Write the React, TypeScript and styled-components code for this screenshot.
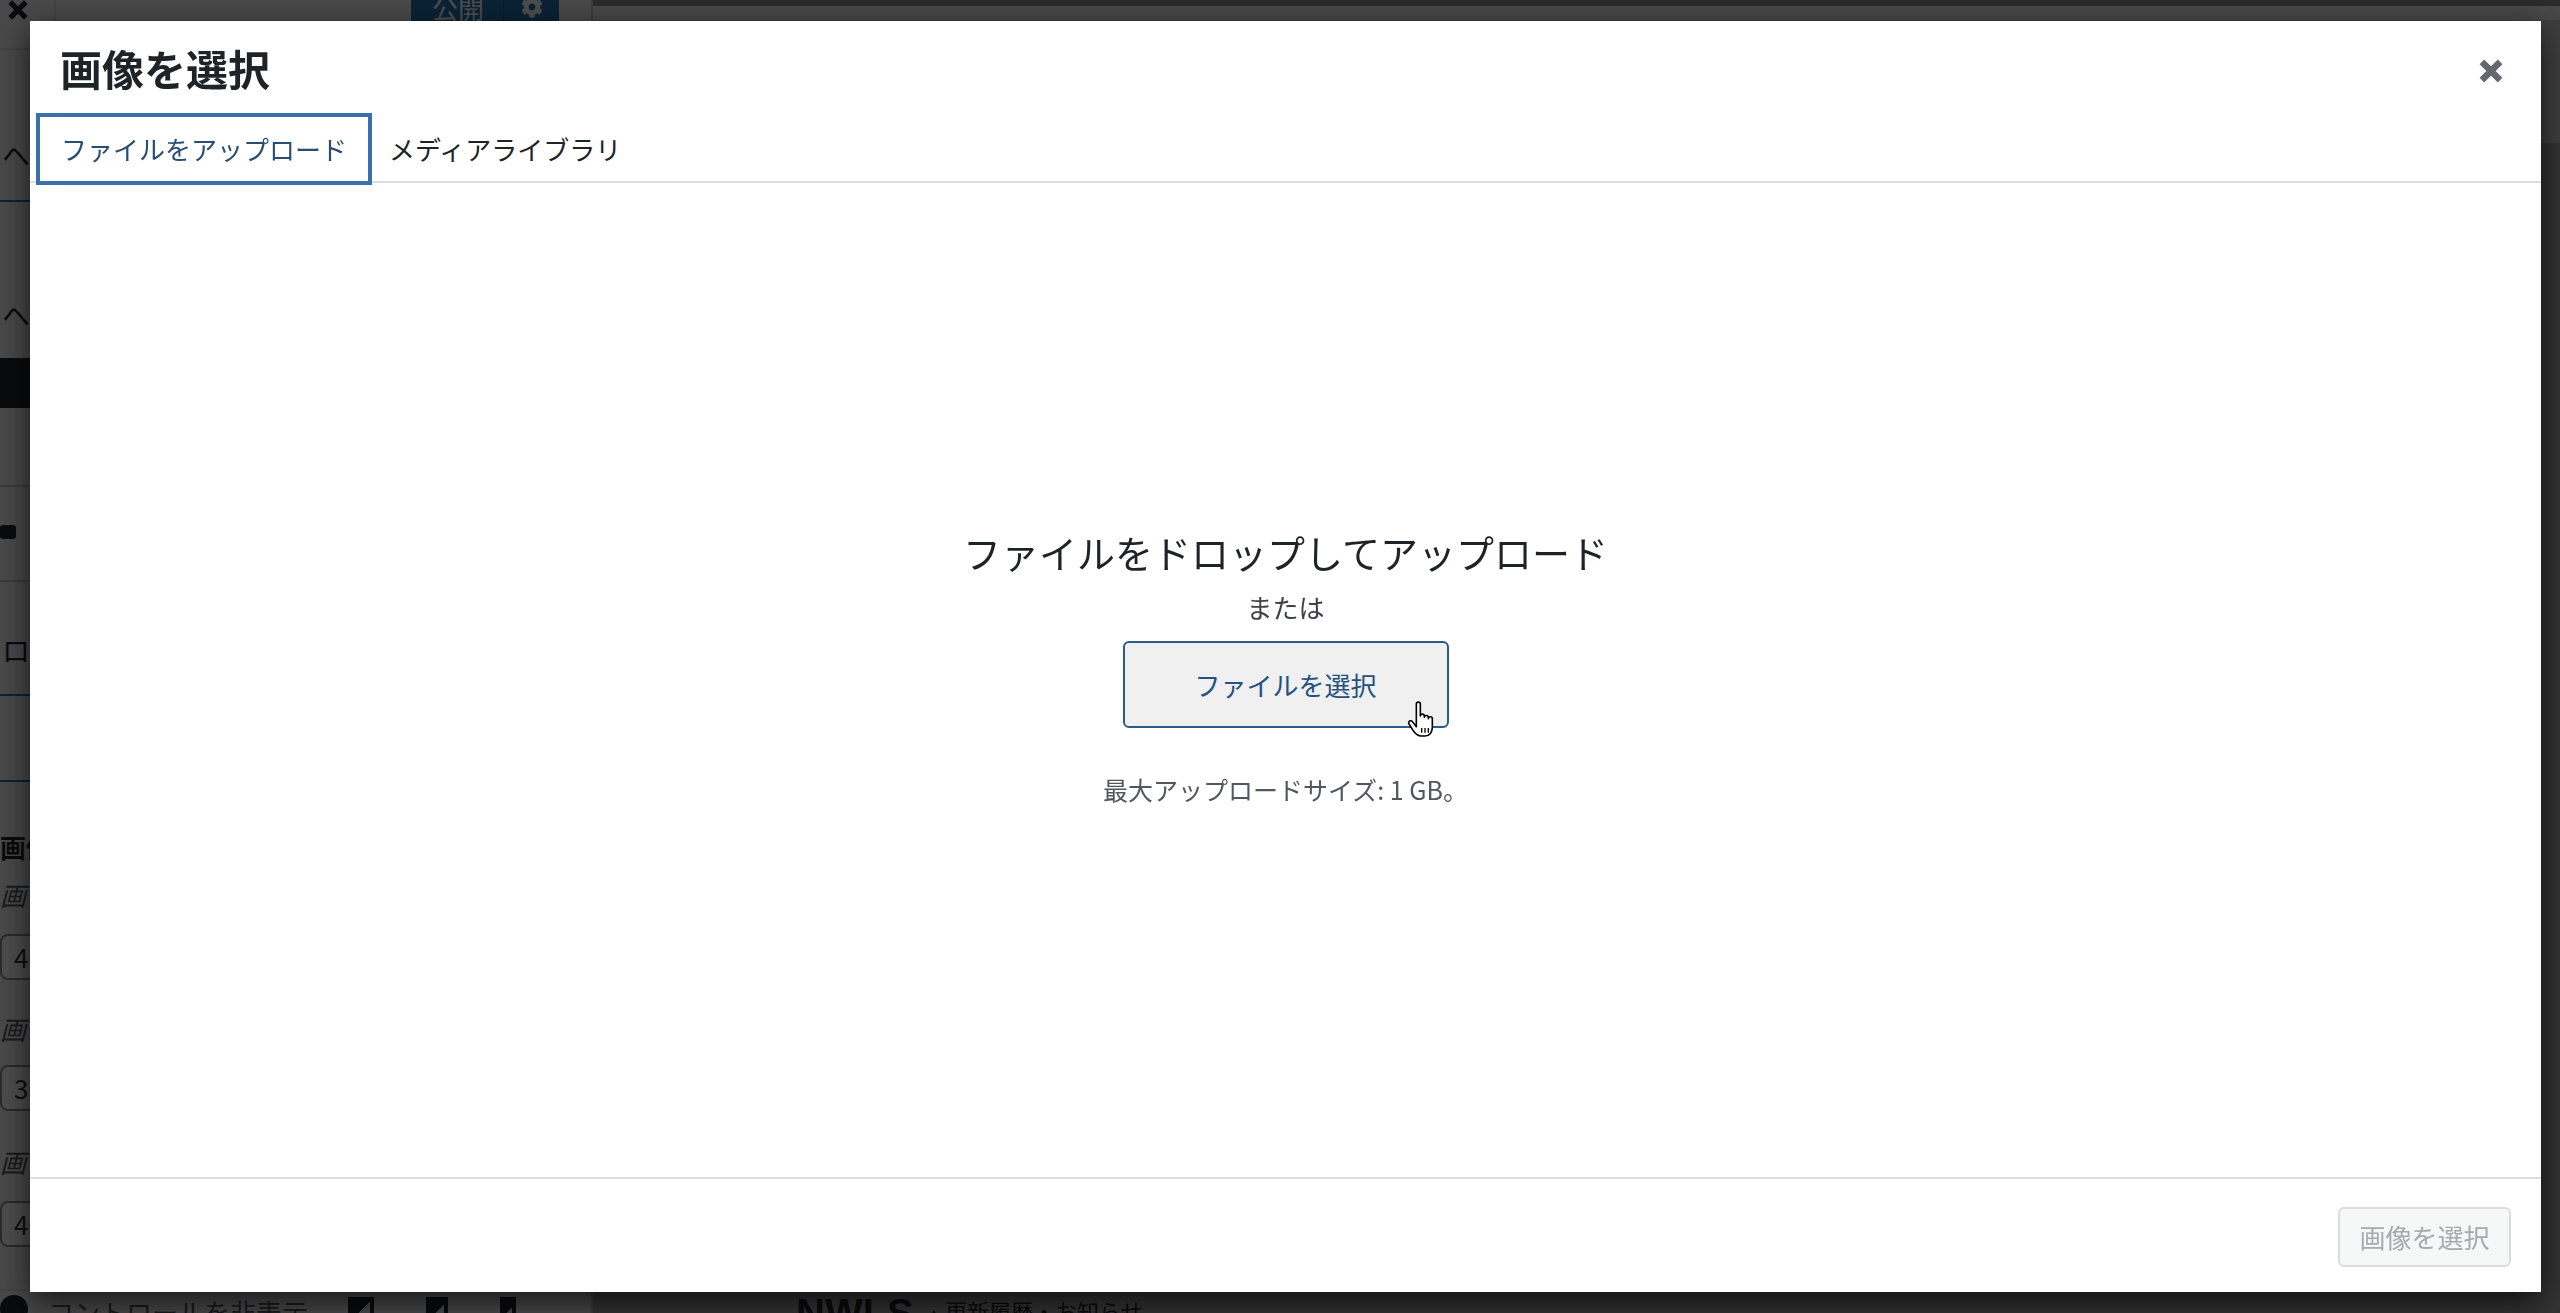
import React from "react";
import styled, { createGlobalStyle } from "styled-components";
import { FaCog } from "react-icons/fa";

const GlobalStyle = createGlobalStyle`
  * { box-sizing: border-box; }
  html, body {
    margin: 0;
    padding: 0;
    height: 100%;
    overflow: hidden;
    background: #aaaaaa;
  }
  body {
    font-family: "Noto Sans CJK JP", "Noto Sans", sans-serif;
  }
  #root { height: 100%; }
`;

const font = `"Noto Sans CJK JP", "Noto Sans", sans-serif`;

/* ---------- customizer behind the modal ---------- */

const Customizer = styled.div`
  display: flex;
  height: 100vh;
`;

const Sidebar = styled.aside`
  width: 593px;
  flex-shrink: 0;
  display: flex;
  flex-direction: column;
  background: #f0f0f1;
  border-right: 2px solid #c3c4c7;
  overflow: hidden;
`;

const SidebarHeader = styled.div`
  height: 50px;
  flex-shrink: 0;
  display: flex;
  align-items: flex-start;
  justify-content: space-between;
  padding-right: 32px;
  border-bottom: 2px solid #dcdcde;
`;

const HeaderClose = styled.div`
  width: 56px;
  height: 48px;
  padding-left: 6px;
  margin-top: -2px;
  border-right: 2px solid #dcdcde;
  color: #1d2327;
`;

const PublishGroup = styled.div`
  display: flex;
  margin-top: -12px;
  height: 40px;
  border-radius: 0 0 6px 6px;
  overflow: hidden;
  background: #2271b1;
  color: #ffffff;
`;

const PublishButton = styled.div`
  width: 92px;
  padding-left: 21px;
  font-size: 26px;
  line-height: 40px;
`;

const GearButton = styled.div`
  width: 56px;
  display: flex;
  align-items: center;
  justify-content: center;
  padding-bottom: 2px;
  border-left: 1px solid #135e96;
`;

const SidebarBody = styled.div`
  flex: 1;
  display: flex;
  flex-direction: column;
  overflow: hidden;
`;

const SectionTitle = styled.div<{ $mt: number }>`
  margin-top: ${(p) => p.$mt}px;
  height: 50px;
  display: flex;
  align-items: center;
  padding-left: 2px;
  font-size: 28px;
  color: #1d2327;
  white-space: nowrap;
`;

const Divider = styled.div<{ $mt: number; $accent?: boolean }>`
  margin-top: ${(p) => p.$mt}px;
  height: 2px;
  background: ${(p) => (p.$accent ? "#2271b1" : "#c3c4c7")};
`;

const DarkBar = styled.div<{ $mt: number }>`
  margin-top: ${(p) => p.$mt}px;
  height: 50px;
  margin-right: 40px;
  background: #1d2327;
`;

const ToggleRow = styled.div<{ $mt: number }>`
  margin-top: ${(p) => p.$mt}px;
  height: 24px;
  display: flex;
  align-items: center;
  gap: 12px;
  font-size: 26px;
  color: #1d2327;
`;

const TogglePill = styled.span`
  width: 16px;
  height: 14px;
  border-radius: 3px;
  background: #1d2327;
`;

const FieldLabel = styled.div<{ $mt: number; $italic?: boolean }>`
  margin-top: ${(p) => p.$mt}px;
  height: 36px;
  line-height: 36px;
  font-size: 26px;
  font-weight: ${(p) => (p.$italic ? 400 : 700)};
  font-style: ${(p) => (p.$italic ? "italic" : "normal")};
  color: ${(p) => (p.$italic ? "#50575e" : "#1d2327")};
  white-space: nowrap;
`;

const NumberInput = styled.div<{ $mt: number }>`
  margin-top: ${(p) => p.$mt}px;
  height: 46px;
  width: 520px;
  border: 2px solid #8c8f94;
  border-radius: 8px;
  background: #ffffff;
  padding-left: 12px;
  font-size: 26px;
  line-height: 42px;
  color: #2c3338;
`;

const SidebarFooter = styled.div`
  height: 24px;
  flex-shrink: 0;
  display: flex;
  align-items: flex-start;
  padding-top: 4px;
  gap: 20px;
  border-top: 2px solid #dcdcde;
  overflow: hidden;
`;

const CollapseIcon = styled.span`
  width: 28px;
  height: 28px;
  border-radius: 50%;
  background: #1d2327;
  flex-shrink: 0;
`;

const FooterLabel = styled.span`
  font-size: 26px;
  line-height: 34px;
  color: #50575e;
  white-space: nowrap;
`;

const Devices = styled.div`
  display: flex;
  gap: 52px;
  margin-left: 20px;
  padding-top: 2px;
`;

const DeviceIcon = styled.span<{ $w: number }>`
  width: ${(p) => p.$w}px;
  height: 28px;
  border: 4px solid #1d2327;
  border-bottom: 0;
  background: linear-gradient(135deg, #1d2327 0 45%, transparent 45%);
`;

const Preview = styled.main`
  flex: 1;
  display: flex;
  flex-direction: column;
  background: #aaaaaa;
`;

const PreviewTopBar = styled.div`
  height: 6px;
  background: #8c8c8c;
`;

const SiteHeader = styled.div`
  height: 14px;
  background: #ededed;
`;

const SiteHero = styled.div`
  height: 123px;
  background: #cfcfcf;
`;

const SiteBody = styled.div`
  flex: 1;
`;

const SiteFooter = styled.div`
  height: 22px;
  display: flex;
  align-items: flex-start;
  gap: 14px;
  padding-left: 203px;
  color: #1d2327;
  overflow: hidden;
`;

const SiteLogo = styled.span`
  font-family: "Liberation Sans", sans-serif;
  font-weight: 700;
  font-size: 40px;
  line-height: 40px;
  margin-top: 2px;
`;

const SiteLinks = styled.span`
  font-size: 22px;
  line-height: 30px;
  margin-top: 4px;
`;

/* ---------- media modal ---------- */

const Backdrop = styled.div`
  position: fixed;
  inset: 0;
  background: rgba(0, 0, 0, 0.7);
`;

const Modal = styled.div`
  position: fixed;
  top: 21px;
  left: 30px;
  right: 19px;
  bottom: 21px;
  display: flex;
  flex-direction: column;
  background: #ffffff;
  box-shadow: 0 10px 30px rgba(0, 0, 0, 0.7);
  font-family: ${font};
`;

const ModalHeader = styled.header`
  height: 92px;
  flex-shrink: 0;
  padding: 20px 30px 0;
`;

const Title = styled.h1`
  margin: 0;
  font-size: 42px;
  line-height: 54px;
  font-weight: 700;
  color: #1d2327;
`;

const CloseButton = styled.button`
  position: absolute;
  top: 0;
  right: 0;
  width: 100px;
  height: 100px;
  padding: 0;
  border: 0;
  background: none;
  display: flex;
  align-items: center;
  justify-content: center;
  color: #646970;
  cursor: pointer;
`;

const Router = styled.nav`
  height: 70px;
  flex-shrink: 0;
  display: flex;
  align-items: flex-start;
  padding: 4px 0 0 10px;
  border-bottom: 2px solid #dcdcde;
`;

const RouterTab = styled.button<{ $active?: boolean }>`
  position: relative;
  z-index: ${(p) => (p.$active ? 2 : 1)};
  height: 64px;
  padding: 0 21px;
  border: 0;
  background: #ffffff;
  font-family: ${font};
  font-size: 26px;
  line-height: 64px;
  color: ${(p) => (p.$active ? "#2a4e72" : "#1d2327")};
  box-shadow: ${(p) => (p.$active ? "0 0 0 4px #3b70aa" : "none")};
  cursor: pointer;
`;

const UploadArea = styled.section`
  flex: 1;
  display: flex;
  flex-direction: column;
  align-items: center;
  padding-top: 341px;
`;

const DropHeading = styled.h2`
  margin: 0;
  font-size: 38px;
  line-height: 56px;
  font-weight: 400;
  color: #1d2327;
`;

const OrText = styled.p`
  margin: 9px 0 0;
  font-size: 26px;
  line-height: 36px;
  color: #3c434a;
`;

const SelectFilesButton = styled.button`
  position: relative;
  margin-top: 16px;
  width: 326px;
  height: 87px;
  border: 2px solid #2e5a86;
  border-radius: 6px;
  background: #f0f0f1;
  font-family: ${font};
  font-size: 26px;
  color: #24527e;
  cursor: pointer;
`;

const Pointer = styled.svg`
  position: absolute;
  left: 280px;
  top: 58px;
`;

const MaxSize = styled.p`
  margin: 43px 0 0;
  font-size: 25px;
  line-height: 36px;
  color: #50575e;
`;

const ModalFooter = styled.footer`
  height: 115px;
  flex-shrink: 0;
  display: flex;
  align-items: center;
  justify-content: flex-end;
  padding: 2px 30px 0 0;
  border-top: 2px solid #dcdcde;
`;

const SelectImageButton = styled.button`
  width: 173px;
  height: 60px;
  border: 2px solid #dcdcde;
  border-radius: 6px;
  background: #f6f7f7;
  font-family: ${font};
  font-size: 26px;
  color: #a7aaad;
`;

const XIcon = ({ size, stroke }: { size: number; stroke: number }) => (
  <svg width={size} height={size} viewBox="0 0 20 20">
    <path
      d="M3.5 3.5 L16.5 16.5 M16.5 3.5 L3.5 16.5"
      stroke="currentColor"
      strokeWidth={stroke}
      fill="none"
    />
  </svg>
);

const HandCursor = () => (
  <Pointer width="32" height="38" viewBox="0 0 24 28">
    <path
      d="M8.5 2 C8.5 1.2 9.2 0.6 10 0.6 C10.8 0.6 11.5 1.2 11.5 2 L11.5 11 C11.5 10.2 12.2 9.6 13 9.6 C13.8 9.6 14.5 10.2 14.5 11 L14.5 12 C14.5 11.2 15.2 10.6 16 10.6 C16.8 10.6 17.5 11.2 17.5 12 L17.5 13 C17.5 12.2 18.2 11.6 19 11.6 C19.8 11.6 20.5 12.2 20.5 13 L20.5 19.5 C20.5 23 18.5 26 15 26 L12 26 C9.5 26 8 24.5 6.5 22.5 L3 17 C2.5 16.2 2.8 15.2 3.5 14.8 C4.3 14.4 5.2 14.7 5.7 15.4 L8.5 19 Z"
      fill="#ffffff"
      stroke="#000000"
      strokeWidth="1.2"
      strokeLinejoin="round"
    />
    <path
      d="M12.5 20 L12.5 23.5 M15 20 L15 23.5 M17.5 20 L17.5 23.5"
      stroke="#000000"
      strokeWidth="1"
    />
  </Pointer>
);

export default function App() {
  return (
    <>
      <GlobalStyle />
      <Customizer>
        <Sidebar>
          <SidebarHeader>
            <HeaderClose>
              <XIcon size={24} stroke={4.4} />
            </HeaderClose>
            <PublishGroup>
              <PublishButton>公開</PublishButton>
              <GearButton>
                <FaCog size={22} />
              </GearButton>
            </PublishGroup>
          </SidebarHeader>
          <SidebarBody>
            <SectionTitle $mt={80}>ヘッダー</SectionTitle>
            <Divider $mt={20} $accent />
            <SectionTitle $mt={88}>ヘッダー画像</SectionTitle>
            <DarkBar $mt={18} />
            <Divider $mt={77} />
            <ToggleRow $mt={33}>
              <TogglePill />
              ヘッダーを表示
            </ToggleRow>
            <Divider $mt={36} />
            <SectionTitle $mt={43}>ロゴ</SectionTitle>
            <Divider $mt={19} $accent />
            <Divider $mt={84} $accent />
            <FieldLabel $mt={47}>画像サイズ</FieldLabel>
            <FieldLabel $mt={12} $italic>
              画像の幅
            </FieldLabel>
            <NumberInput $mt={21}>400</NumberInput>
            <FieldLabel $mt={31} $italic>
              画像の高さ
            </FieldLabel>
            <NumberInput $mt={18}>300</NumberInput>
            <FieldLabel $mt={33} $italic>
              画像の最大幅
            </FieldLabel>
            <NumberInput $mt={21}>400</NumberInput>
          </SidebarBody>
          <SidebarFooter>
            <CollapseIcon />
            <FooterLabel>コントロールを非表示</FooterLabel>
            <Devices>
              <DeviceIcon $w={26} />
              <DeviceIcon $w={22} />
              <DeviceIcon $w={16} />
            </Devices>
          </SidebarFooter>
        </Sidebar>
        <Preview>
          <PreviewTopBar />
          <SiteHeader />
          <SiteHero />
          <SiteBody />
          <SiteFooter>
            <SiteLogo>NWLS</SiteLogo>
            <SiteLinks>· 更新履歴・お知らせ</SiteLinks>
          </SiteFooter>
        </Preview>
      </Customizer>

      <Backdrop />
      <Modal role="dialog" aria-label="画像を選択">
        <ModalHeader>
          <Title>画像を選択</Title>
        </ModalHeader>
        <CloseButton aria-label="閉じる">
          <XIcon size={28} stroke={4.6} />
        </CloseButton>
        <Router>
          <RouterTab $active>ファイルをアップロード</RouterTab>
          <RouterTab>メディアライブラリ</RouterTab>
        </Router>
        <UploadArea>
          <DropHeading>ファイルをドロップしてアップロード</DropHeading>
          <OrText>または</OrText>
          <SelectFilesButton>
            ファイルを選択
            <HandCursor />
          </SelectFilesButton>
          <MaxSize>最大アップロードサイズ: 1 GB。</MaxSize>
        </UploadArea>
        <ModalFooter>
          <SelectImageButton disabled>画像を選択</SelectImageButton>
        </ModalFooter>
      </Modal>
    </>
  );
}
